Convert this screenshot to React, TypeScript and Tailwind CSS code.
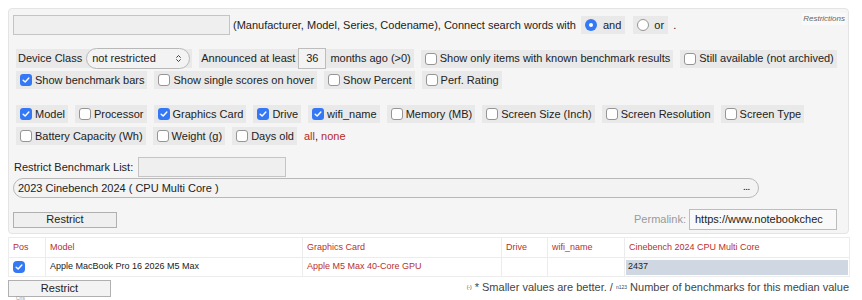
import { ChevronsUpDown } from "lucide-react";

function Check({ on }: { on?: boolean }) {
  if (on) {
    return (
      <span className="inline-flex h-[12px] w-[12px] shrink-0 items-center justify-center rounded-[3px] bg-[#3478f6]">
        <svg viewBox="0 0 12 12" className="h-[10px] w-[10px]">
          <path d="M2.6 6.2 L5 8.5 L9.4 3.6" fill="none" stroke="white" strokeWidth="1.7" strokeLinecap="round" strokeLinejoin="round" />
        </svg>
      </span>
    );
  }
  return <span className="inline-block h-[12px] w-[12px] shrink-0 rounded-[3px] border border-[#959595] bg-white" />;
}

function Radio({ on }: { on?: boolean }) {
  return on ? (
    <span className="inline-flex h-[12px] w-[12px] items-center justify-center rounded-full bg-[#3478f6]">
      <span className="h-[4px] w-[4px] rounded-full bg-white" />
    </span>
  ) : (
    <span className="inline-block h-[12px] w-[12px] rounded-full border border-[#959595] bg-white" />
  );
}

function Opt({ label, on }: { label: string; on?: boolean }) {
  return (
    <label className="flex h-[18px] items-center bg-[#e9e9e9] pl-1 pr-[3px]">
      <Check on={on} />
      <span className="ml-[3px] whitespace-nowrap">{label}</span>
    </label>
  );
}

const columns = [
  { label: "Model", on: true },
  { label: "Processor" },
  { label: "Graphics Card", on: true },
  { label: "Drive", on: true },
  { label: "wifi_name", on: true },
  { label: "Memory (MB)" },
  { label: "Screen Size (Inch)" },
  { label: "Screen Resolution" },
  { label: "Screen Type" },
];

export default function App() {
  return (
    <div className="h-[300px] w-[862px] overflow-hidden bg-white font-['Liberation_Sans',Arial,sans-serif] text-[11px] text-[#222]">
      <div className="relative ml-2 mt-2 h-[226px] w-[841px] rounded-[4px] border border-[#e4e4e4] bg-[#f5f5f5] px-1">
        <span className="absolute right-[2px] top-[4px] bg-[#f9f9f9] px-[1px] text-[8px] italic text-[#666]">Restrictions</span>

        <div className="mt-[6px] flex h-[20px] items-center">
          <div className="h-[20px] w-[217px] border border-[#c4c4c4] bg-[#efefef]" />
          <span className="ml-[3px]">(Manufacturer, Model, Series, Codename), Connect search words with</span>
          <label className="ml-[5px] flex h-[18px] items-center gap-[6px] bg-[#e9e9e9] pl-1 pr-[4px]">
            <Radio on />
            <span>and</span>
          </label>
          <label className="ml-[8px] flex h-[18px] items-center gap-[5px] bg-[#e9e9e9] pl-1 pr-[4px]">
            <Radio />
            <span>or</span>
          </label>
          <span className="ml-[5px] text-[#222]">.</span>
        </div>

        <div className="ml-[3px] mt-[13px] flex h-[21px] items-center gap-[7px]">
          <div className="flex h-[19px] items-center bg-[#e9e9e9] pl-[2px] pr-[2px]">
            <span>Device Class</span>
            <div className="ml-[4px] flex h-[21px] w-[104px] items-center justify-between rounded-full border border-[#b8b8b8] bg-[#f3f3f3] pl-[5px] pr-[6px]">
              <span>not restricted</span>
              <ChevronsUpDown size={9} strokeWidth={2.5} className="text-[#333]" />
            </div>
          </div>
          <div className="flex h-[19px] items-center bg-[#e9e9e9] pl-[2px] pr-[3px]">
            <span>Announced at least</span>
            <div className="ml-[3px] flex h-[21px] w-[28px] items-center justify-center border border-[#bdbdbd] bg-[#f3f3f3]">36</div>
            <span className="ml-[4px]">months ago (&gt;0)</span>
          </div>
          <Opt label="Show only items with known benchmark results" />
          <Opt label="Still available (not archived)" />
        </div>

        <div className="ml-[3px] mt-[2px] flex items-center gap-[7px]">
          <Opt label="Show benchmark bars" on />
          <Opt label="Show single scores on hover" />
          <Opt label="Show Percent" />
          <Opt label="Perf. Rating" />
        </div>

        <div className="ml-[3px] mt-[16px] flex items-center gap-[7px]">
          {columns.map((c) => (
            <Opt key={c.label} label={c.label} on={c.on} />
          ))}
        </div>

        <div className="ml-[3px] mt-[4px] flex items-center gap-[7px]">
          <Opt label="Battery Capacity (Wh)" />
          <Opt label="Weight (g)" />
          <Opt label="Days old" />
          <span className="text-[#b52a24]">
            all<span className="text-[#222]">,</span> none
          </span>
        </div>

        <div className="mt-[12px] flex h-[20px] items-center">
          <span className="ml-[1px]">Restrict Benchmark List:</span>
          <div className="ml-[5px] h-[20px] w-[148px] border border-[#c4c4c4] bg-[#efefef]" />
        </div>

        <div className="mt-[1px] flex h-[20px] w-[746px] items-center justify-between rounded-full border border-[#b8b8b8] bg-[#f3f3f3] pl-[4px] pr-[8px]">
          <span>2023 Cinebench 2024 ( CPU Multi Core )</span>
          <span className="text-[8px] font-bold leading-none">...</span>
        </div>

        <div className="mr-[7px] mt-[11px] flex items-center justify-between">
          <button className="h-[16px] w-[104px] border border-[#b0b0b0] bg-[#efefef] text-[11px] leading-none text-[#222]">Restrict</button>
          <div className="flex items-center">
            <span className="text-[#9a9a9a]">Permalink:</span>
            <div className="ml-[3px] flex h-[21px] w-[148px] items-center whitespace-nowrap border border-[#bdbdbd] bg-[#f9f9f9] pl-[5px]">
              https://www.notebookchec
            </div>
          </div>
        </div>
      </div>

      <table className="ml-2 mt-[3px] w-[841px] table-fixed border-collapse bg-white text-[9px]">
        <colgroup>
          <col className="w-[37px]" />
          <col className="w-[257px]" />
          <col className="w-[199px]" />
          <col className="w-[46px]" />
          <col className="w-[77px]" />
          <col className="w-[225px]" />
        </colgroup>
        <thead>
          <tr className="h-[20px] text-left text-[#b8312c]">
            <th className="border border-[#ececec] pl-[4px] font-normal">Pos</th>
            <th className="border border-[#ececec] pl-[4px] font-normal">Model</th>
            <th className="border border-[#ececec] pl-[4px] font-normal">Graphics Card</th>
            <th className="border border-[#ececec] pl-[4px] font-normal">Drive</th>
            <th className="border border-[#ececec] pl-[4px] font-normal">wifi_name</th>
            <th className="border border-[#ececec] pl-[4px] font-normal">Cinebench 2024 CPU Multi Core</th>
          </tr>
        </thead>
        <tbody>
          <tr className="h-[19px]">
            <td className="border border-[#ececec] pl-[4px]">
              <span className="inline-flex h-[12px] w-[12px] items-center justify-center rounded-[4px] bg-[#3478f6] align-middle">
                <svg viewBox="0 0 12 12" className="h-[10px] w-[10px]">
                  <path d="M2.6 6.2 L5 8.5 L9.4 3.6" fill="none" stroke="white" strokeWidth="1.7" strokeLinecap="round" strokeLinejoin="round" />
                </svg>
              </span>
            </td>
            <td className="border border-[#ececec] pl-[4px]">Apple MacBook Pro 16 2026 M5 Max</td>
            <td className="border border-[#ececec] pl-[4px] text-[#b8312c]">Apple M5 Max 40-Core GPU</td>
            <td className="border border-[#ececec]" />
            <td className="border border-[#ececec]" />
            <td className="border border-[#ececec] p-[1px]">
              <div className="flex h-[15px] items-center bg-[#cfd8e2] pl-[2px]">2437</div>
            </td>
          </tr>
        </tbody>
      </table>

      <div className="ml-2 mt-[3px] flex w-[841px] items-start justify-between">
        <div>
          <button className="h-[17px] w-[103px] border border-[#b0b0b0] bg-[#f3f3f3] text-[11px] leading-none text-[#222]">Restrict</button>
          <div className="ml-[8px] mt-[-1px] text-[5px] leading-[5px] text-[#999]">Cns</div>
        </div>
        <div className="mt-[-1px] text-[#444]">
          <sup className="text-[5px]">(-)</sup> * Smaller values are better. / <sup className="text-[5px]">n123</sup> Number of benchmarks for this median value
        </div>
      </div>
    </div>
  );
}
